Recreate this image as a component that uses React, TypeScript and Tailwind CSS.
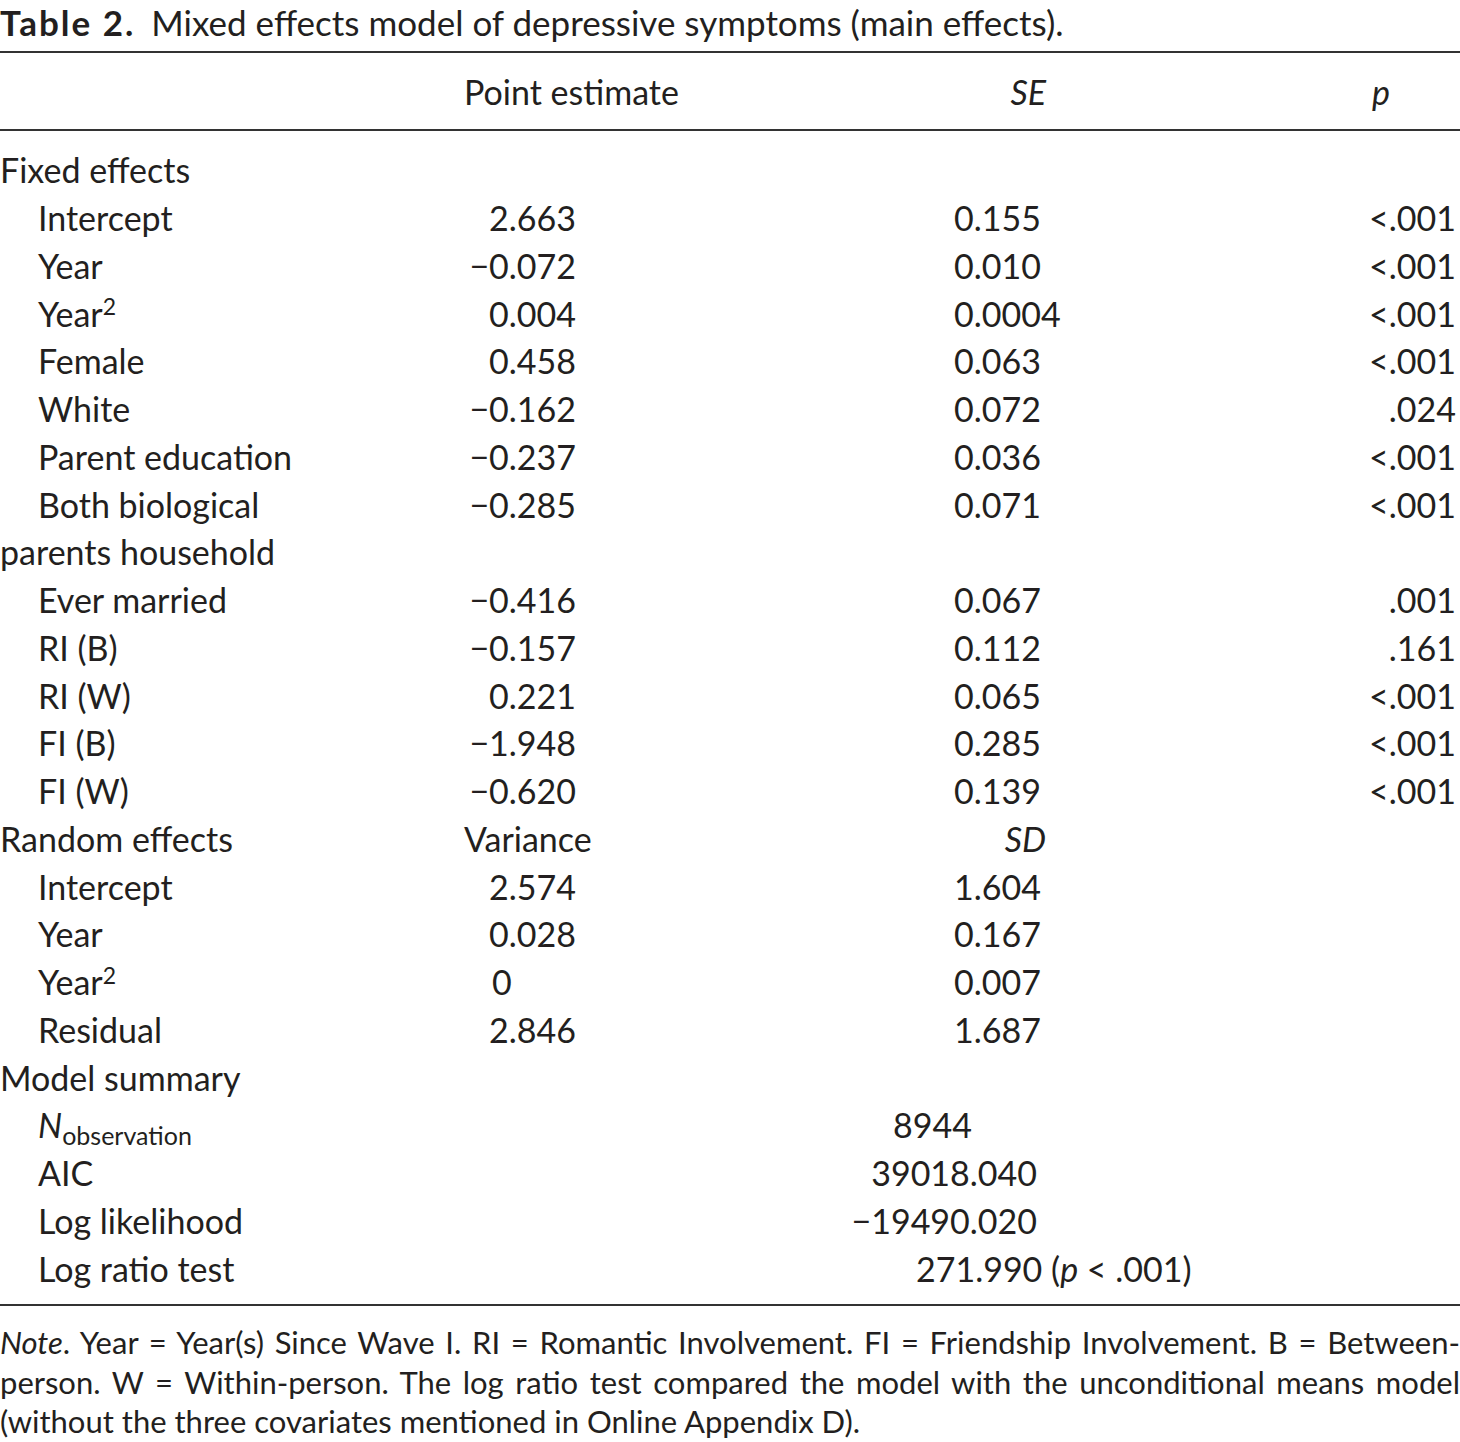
import React from "react";

type Row = {
  label: React.ReactNode;
  indent?: boolean;
  point?: React.ReactNode;
  pointLeft?: boolean;
  se?: React.ReactNode;
  p?: string;
};

const M = "\u2212";

const rows: Row[] = [
  { label: "Fixed effects" },
  { label: "Intercept", indent: true, point: "2.663", se: "0.155", p: "<.001" },
  { label: "Year", indent: true, point: `${M}0.072`, se: "0.010", p: "<.001" },
  {
    label: (
      <>
        Year<sup className="text-[23px]">2</sup>
      </>
    ),
    indent: true,
    point: "0.004",
    se: "0.0004",
    p: "<.001",
  },
  { label: "Female", indent: true, point: "0.458", se: "0.063", p: "<.001" },
  { label: "White", indent: true, point: `${M}0.162`, se: "0.072", p: ".024" },
  { label: "Parent education", indent: true, point: `${M}0.237`, se: "0.036", p: "<.001" },
  { label: "Both biological", indent: true, point: `${M}0.285`, se: "0.071", p: "<.001" },
  { label: "parents household" },
  { label: "Ever married", indent: true, point: `${M}0.416`, se: "0.067", p: ".001" },
  { label: "RI (B)", indent: true, point: `${M}0.157`, se: "0.112", p: ".161" },
  { label: "RI (W)", indent: true, point: "0.221", se: "0.065", p: "<.001" },
  { label: "FI (B)", indent: true, point: `${M}1.948`, se: "0.285", p: "<.001" },
  { label: "FI (W)", indent: true, point: `${M}0.620`, se: "0.139", p: "<.001" },
];

const randomRows: Row[] = [
  { label: "Intercept", indent: true, point: "2.574", se: "1.604" },
  { label: "Year", indent: true, point: "0.028", se: "0.167" },
  {
    label: (
      <>
        Year<sup className="text-[23px]">2</sup>
      </>
    ),
    indent: true,
    point: "0",
    pointLeft: true,
    se: "0.007",
  },
  { label: "Residual", indent: true, point: "2.846", se: "1.687" },
];

function TableRow({ r }: { r: Row }) {
  return (
    <div className="flex h-[47.75px] items-center whitespace-nowrap">
      <div className={`w-[464px] shrink-0 ${r.indent ? "pl-[38px]" : ""}`}>{r.label}</div>
      <div className={`w-[112px] shrink-0 ${r.pointLeft ? "pl-[28px] text-left" : "text-right"}`}>
        {r.point}
      </div>
      <div className="w-[378px] shrink-0" />
      <div className="flex-1 text-left">{r.se}</div>
      <div className="pr-[4px] text-right">{r.p}</div>
    </div>
  );
}

export default function App() {
  return (
    <div
      className="w-[1460px] h-[1442px] bg-white text-[#231f20] overflow-hidden"
      style={{ fontFamily: "Lato, 'Open Sans', sans-serif" }}
    >
      <div className="h-[51px] flex items-center text-[35px] leading-none pb-[6px] whitespace-nowrap">
        <span className="font-bold tracking-[2px]">Table 2.</span>
        <span className="ml-[16px]">Mixed effects model of depressive symptoms (main effects).</span>
      </div>
      <div className="h-[2px] bg-[#333333]" />
      <div className="h-[76px] flex items-center text-[34px] whitespace-nowrap">
        <div className="w-[464px] shrink-0" />
        <div className="w-[490px] shrink-0">Point estimate</div>
        <div className="w-[92px] shrink-0 text-right italic">SE</div>
        <div className="flex-1 text-right pr-[70px] italic">p</div>
      </div>
      <div className="h-[2px] bg-[#333333]" />
      <div className="pt-[15px] pb-[12px] text-[34px]">
        {rows.map((r, i) => (
          <TableRow key={i} r={r} />
        ))}
        <div className="flex h-[47.75px] items-center whitespace-nowrap">
          <div className="w-[464px] shrink-0">Random effects</div>
          <div className="w-[490px] shrink-0">Variance</div>
          <div className="w-[92px] shrink-0 text-right italic">SD</div>
        </div>
        {randomRows.map((r, i) => (
          <TableRow key={i} r={r} />
        ))}
        <div className="flex h-[47.75px] items-center">Model summary</div>
        <div className="flex h-[47.75px] items-center whitespace-nowrap">
          <div className="w-[464px] shrink-0 pl-[38px]">
            <span className="italic">N</span>
            <sub className="text-[25px] not-italic">observation</sub>
          </div>
          <div className="w-[508px] shrink-0 text-right">8944</div>
        </div>
        <div className="flex h-[47.75px] items-center whitespace-nowrap">
          <div className="w-[464px] shrink-0 pl-[38px]">AIC</div>
          <div className="w-[573px] shrink-0 text-right">39018.040</div>
        </div>
        <div className="flex h-[47.75px] items-center whitespace-nowrap">
          <div className="w-[464px] shrink-0 pl-[38px]">Log likelihood</div>
          <div className="w-[573px] shrink-0 text-right">{M}19490.020</div>
        </div>
        <div className="flex h-[47.75px] items-center whitespace-nowrap">
          <div className="w-[464px] shrink-0 pl-[38px]">Log ratio test</div>
          <div className="pl-[452px]">
            271.990 (<span className="italic">p</span> &lt; .001)
          </div>
        </div>
      </div>
      <div className="h-[2px] bg-[#333333]" />
      <div className="pt-[17px] text-[31px] leading-[39.5px]">
        <div className="text-justify [text-align-last:justify] whitespace-nowrap">
          <span className="italic">Note</span>. Year = Year(s) Since Wave I. RI = Romantic Involvement. FI = Friendship
          Involvement. B = Between-
        </div>
        <div className="text-justify [text-align-last:justify] whitespace-nowrap">
          person. W = Within-person. The log ratio test compared the model with the unconditional means model
        </div>
        <div className="whitespace-nowrap">(without the three covariates mentioned in Online Appendix D).</div>
      </div>
    </div>
  );
}
